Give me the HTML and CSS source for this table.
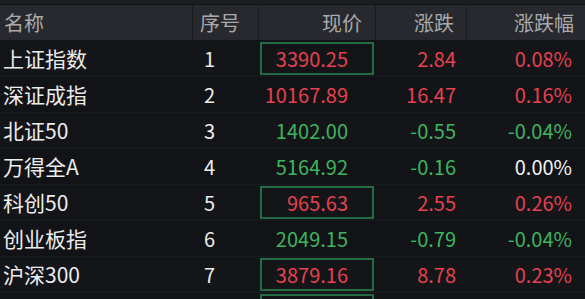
FILE: index.html
```html
<!DOCTYPE html>
<html lang="zh-CN">
<head>
<meta charset="utf-8">
<link rel="stylesheet" href="styles.css">
</head>
<body>
<div class="topbar"></div>
<div class="table">
  <div class="row head">
    <div class="c name">名称</div>
    <div class="c seq">序号</div>
    <div class="c price">现价</div>
    <div class="c chg">涨跌</div>
    <div class="c pct">涨跌幅</div>
  </div>
  <div class="row">
    <div class="c name">上证指数</div>
    <div class="c seq">1</div>
    <div class="c price"><span class="box red">3390.25</span></div>
    <div class="c chg red">2.84</div>
    <div class="c pct red">0.08%</div>
  </div>
  <div class="row alt">
    <div class="c name">深证成指</div>
    <div class="c seq">2</div>
    <div class="c price"><span class="plain red">10167.89</span></div>
    <div class="c chg red">16.47</div>
    <div class="c pct red">0.16%</div>
  </div>
  <div class="row">
    <div class="c name">北证50</div>
    <div class="c seq">3</div>
    <div class="c price"><span class="plain green">1402.00</span></div>
    <div class="c chg green">-0.55</div>
    <div class="c pct green">-0.04%</div>
  </div>
  <div class="row alt">
    <div class="c name">万得全A</div>
    <div class="c seq">4</div>
    <div class="c price"><span class="plain green">5164.92</span></div>
    <div class="c chg green">-0.16</div>
    <div class="c pct white">0.00%</div>
  </div>
  <div class="row">
    <div class="c name">科创50</div>
    <div class="c seq">5</div>
    <div class="c price"><span class="box red">965.63</span></div>
    <div class="c chg red">2.55</div>
    <div class="c pct red">0.26%</div>
  </div>
  <div class="row alt">
    <div class="c name">创业板指</div>
    <div class="c seq">6</div>
    <div class="c price"><span class="plain green">2049.15</span></div>
    <div class="c chg green">-0.79</div>
    <div class="c pct green">-0.04%</div>
  </div>
  <div class="row">
    <div class="c name">沪深300</div>
    <div class="c seq">7</div>
    <div class="c price"><span class="box red">3879.16</span></div>
    <div class="c chg red">8.78</div>
    <div class="c pct red">0.23%</div>
  </div>
  <div class="row alt">
    <div class="c name"></div>
    <div class="c seq"></div>
    <div class="c price"><span class="box red"></span></div>
    <div class="c chg"></div>
    <div class="c pct"></div>
  </div>
</div>
</body>
</html>
```

FILE: styles.css
```css
html, body {
  margin: 0;
  padding: 0;
  background: #121317;
  overflow: hidden;
}
body {
  width: 585px;
  height: 299px;
  font-family: "Noto Sans CJK SC", "Noto Sans", sans-serif;
  font-size: 20px;
  color: #ececec;
}
.topbar {
  height: 5px;
  background: #1c1d21;
  border-bottom: 1px solid #101114;
  box-sizing: border-box;
}
.table {
  display: flex;
  flex-direction: column;
  height: 294px;
  overflow: hidden;
}
.row {
  display: grid;
  grid-template-columns: 193px 66px 117px 91px 118px;
  height: 36px;
  flex: none;
  background: #141519;
  border-bottom: 1px solid #1a1b20;
  box-sizing: border-box;
}
.row.alt {
  background: #121317;
}
.row.head {
  height: 36px;
  background: #28292e;
  border-bottom: 1px solid #111216;
  color: #a9a9ab;
}
.c {
  display: flex;
  align-items: center;
  line-height: 1;
  white-space: nowrap;
}
.head .c {
  border-right: 1px solid #1b1c20;
}
.name { padding-left: 3px; font-size: 21px; }
.head .name { font-size: 20px; padding-left: 4px; }
.seq { padding-left: 11px; }
.head .seq { padding-left: 7px; }
.price { justify-content: flex-end; padding: 1px 2px 1px 1px; }
.head .price { padding-right: 13px; }
.chg { justify-content: flex-end; padding-right: 11px; }
.head .chg { padding-right: 12px; }
.pct { justify-content: flex-end; padding-right: 13px; }
.head .pct { padding-right: 11px; border-right: none; }
.box, .plain {
  display: flex;
  align-items: center;
  justify-content: flex-end;
  width: 100%;
  height: 100%;
  box-sizing: border-box;
  padding-right: 26px;
}
.box {
  border: 2px solid #256b43;
  padding-right: 24px;
}
.red { color: #e5414e; }
.green { color: #3db45e; }
.white { color: #f2f2f2; }
```
